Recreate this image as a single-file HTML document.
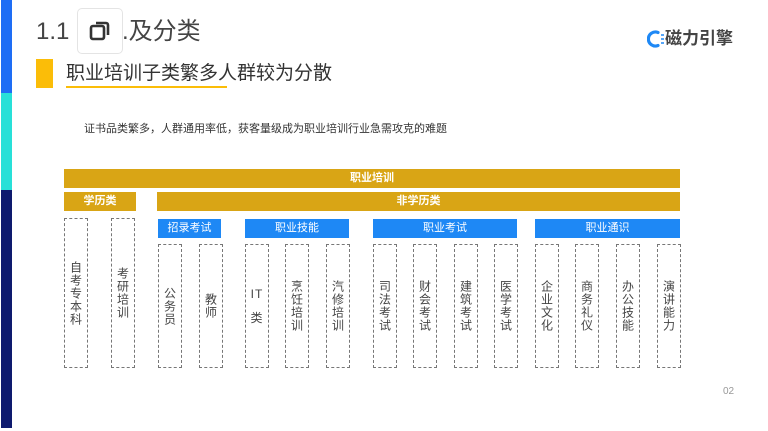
<!DOCTYPE html>
<html><head><meta charset="utf-8"><style>
*{margin:0;padding:0;box-sizing:border-box}
body{width:768px;height:431px;background:#fff;position:relative;overflow:hidden;font-family:"Liberation Sans","Noto Sans CJK SC",sans-serif}
.a{position:absolute}
.g{background:#d9a515;color:#fff;font-size:11px;font-weight:bold;text-align:center;line-height:19px}
.b{background:#1e88f5;color:#fff;font-size:11px;text-align:center;line-height:19px}
.d{border:1px dashed #777;font-size:12px;color:#444;display:flex;align-items:center;justify-content:center;writing-mode:vertical-rl;text-orientation:upright;letter-spacing:1px;width:24px}
</style></head><body>
<div class="a" style="left:1px;top:0;width:11px;height:93px;background:#1e6df5"></div>
<div class="a" style="left:1px;top:93px;width:11px;height:97px;background:#28e0d8"></div>
<div class="a" style="left:1px;top:190px;width:11px;height:238px;background:#0e1a6e"></div>
<div class="a" style="left:36px;top:17px;font-size:24px;color:#444;line-height:30px">1.1</div>
<div class="a" style="left:122px;top:17px;font-size:24px;color:#444;line-height:30px">.及分类</div>
<div class="a" style="left:77px;top:8px;width:46px;height:46px;border:1px solid #e4e4e4;border-radius:5px;background:#fff"></div>
<svg class="a" style="left:88px;top:19px" width="24" height="24" viewBox="0 0 24 24"><rect x="3" y="7" width="13" height="13" rx="2" fill="none" stroke="#333" stroke-width="2.6"/><path d="M8 4h10a2 2 0 0 1 2 2v10" fill="none" stroke="#333" stroke-width="2.6"/></svg>
<div class="a" style="left:36px;top:59px;width:17px;height:29px;background:#fbbd08"></div>
<div class="a" style="left:66px;top:61px;font-size:19px;color:#333;line-height:26px">职业培训子类繁多人群较为分散</div>
<div class="a" style="left:66px;top:86px;width:161px;height:2px;background:#fbbd08"></div>
<div class="a" style="left:84px;top:120px;font-size:11px;color:#333">证书品类繁多，人群通用率低，获客量级成为职业培训行业急需攻克的难题</div>
<svg class="a" style="left:647px;top:29px" width="18" height="20" viewBox="0 0 18 20"><path d="M11 3.5A7 7 0 1 0 11 16.5" fill="none" stroke="#1e88f5" stroke-width="3.2" stroke-linecap="round"/><path d="M14 6h3M14 10h3M14 14h3" stroke="#1e88f5" stroke-width="1.5"/></svg>
<div class="a" style="left:665px;top:28px;font-size:17px;color:#444;font-weight:bold;line-height:22px">磁力引擎</div>
<div class="a g" style="left:64px;top:169px;width:616px">职业培训</div>
<div class="a g" style="left:64px;top:192px;width:72px">学历类</div>
<div class="a g" style="left:157px;top:192px;width:523px">非学历类</div>
<div class="a b" style="left:158px;top:219px;width:63px">招录考试</div>
<div class="a b" style="left:245px;top:219px;width:104px">职业技能</div>
<div class="a b" style="left:373px;top:219px;width:144px">职业考试</div>
<div class="a b" style="left:535px;top:219px;width:145px">职业通识</div>
<div class="a d" style="left:64px;top:218px;height:150px">自考专本科</div>
<div class="a d" style="left:111px;top:218px;height:150px">考研培训</div>
<div class="a d" style="left:158px;top:244px;height:124px">公务员</div>
<div class="a d" style="left:199px;top:244px;height:124px">教师</div>
<div class="a d" style="left:245px;top:244px;height:124px;writing-mode:horizontal-tb;flex-direction:column;text-align:center;line-height:24px">IT<br>类</div>
<div class="a d" style="left:285px;top:244px;height:124px">烹饪培训</div>
<div class="a d" style="left:326px;top:244px;height:124px">汽修培训</div>
<div class="a d" style="left:373px;top:244px;height:124px">司法考试</div>
<div class="a d" style="left:413px;top:244px;height:124px">财会考试</div>
<div class="a d" style="left:454px;top:244px;height:124px">建筑考试</div>
<div class="a d" style="left:494px;top:244px;height:124px">医学考试</div>
<div class="a d" style="left:535px;top:244px;height:124px">企业文化</div>
<div class="a d" style="left:575px;top:244px;height:124px">商务礼仪</div>
<div class="a d" style="left:616px;top:244px;height:124px">办公技能</div>
<div class="a d" style="left:657px;top:244px;height:124px">演讲能力</div>
<div class="a" style="left:723px;top:386px;font-size:10px;color:#999">02</div>
</body></html>
